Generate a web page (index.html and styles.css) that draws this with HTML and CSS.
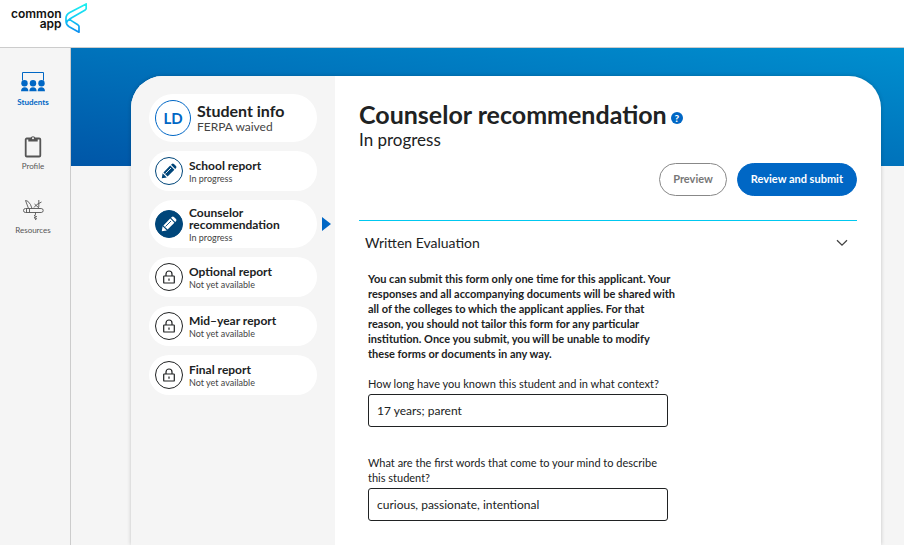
FILE: index.html
```html
<!DOCTYPE html>
<html lang="en">
<head>
<meta charset="utf-8">
<meta name="viewport" content="width=device-width, initial-scale=1">
<title>Counselor recommendation</title>
<link rel="stylesheet" href="styles.css">
</head>
<body>
<header class="topbar">
  <a class="logo" href="#" aria-label="Common App">
    <span class="logo-text"><span>common</span><span>app</span></span>
    <svg class="logo-mark" viewBox="0 0 22 30" aria-hidden="true">
      <defs><linearGradient id="mark" x1="0" y1="0" x2="0" y2="1"><stop offset="0" stop-color="#1ff0ee"/><stop offset=".5" stop-color="#12ccf5"/><stop offset="1" stop-color="#0a8df0"/></linearGradient></defs>
      <path d="M21.200.9 4.800 9.400Q1 11.500 1 15V18Q1 21.800 4.200 23.800L14 29.200V23.600Q14 22.400 12.800 21.700L6.300 17.600Q4.500 16.500 4.800 15.900M21.200.9V5.300Q21.200 6.300 20.200 6.900L6.300 15Q1.800 17.600 1.500 20.200" fill="none" stroke="url(#mark)" stroke-width="1.700" stroke-linejoin="round" stroke-linecap="round"/>
    </svg>
  </a>
</header>
<div class="shell">
  <nav class="rail" aria-label="Main">
    <a class="rail-link active" href="#">
      <svg class="rail-icon" viewBox="0 0 24 24" aria-hidden="true">
        <path d="M1.500 9.500v-8h21v8" fill="none" stroke="currentColor"/>
        <g fill="currentColor"><circle cx="3.500" cy="12.200" r="3.200"/><circle cx="12" cy="12.200" r="3.200"/><circle cx="20.500" cy="12.200" r="3.200"/>
        <path d="M0 20.300q.2-4 3.700-4T7.400 20.300zM8.300 20.300q.2-4 3.700-4T15.700 20.300zM16.600 20.300q.2-4 3.700-4T24 20.300z"/></g>
      </svg>
      <span>Students</span>
    </a>
    <a class="rail-link" href="#">
      <svg class="rail-icon" viewBox="0 0 24 24" aria-hidden="true">
        <path d="M5.800 3.500h12.400q1.100 0 1.100 1.100v15.800q0 1.100-1.100 1.100H5.800q-1.100 0-1.100-1.100V4.600Q4.700 3.500 5.800 3.500z" fill="none" stroke="currentColor" stroke-width="1.800"/>
        <path d="M7.300 3H9.600a2.500 2.500 0 0 1 4.800 0h2.300v3.500H7.300z" fill="currentColor"/><circle cx="12" cy="3.200" r="1" fill="#f5f5f5"/>
      </svg>
      <span>Profile</span>
    </a>
    <a class="rail-link" href="#">
      <svg class="rail-icon" viewBox="0 0 24 24" aria-hidden="true" fill="none" stroke="currentColor" stroke-width=".9" stroke-linejoin="round">
        <path d="M4.500 9.500h15.700a2 2 0 0 1 0 4H4.500a2 2 0 0 1 0-4zM5.500 9.500v4M8.500 9.500v4M7.500 9.500 4.500 1.500l2.300.7Q10 5 11 9.500M13 8.500q1.500-3 7.500-5.500M13.500 5l5 4.500M17.800 1v7M14.500 13.500v2.200l-1.500 1 2.700.9-2.700 1.200 2.700.9-1.700 1.200"/>
      </svg>
      <span>Resources</span>
    </a>
  </nav>
  <main class="stage">
    <div class="card">
      <aside class="steps" aria-label="Forms">
        <a class="step student" href="#">
          <span class="badge initials">LD</span>
          <span class="step-text"><strong>Student info</strong><small>FERPA waived</small></span>
        </a>
        <a class="step" href="#">
          <span class="badge edit"><svg viewBox="0 0 16 16" aria-hidden="true"><use href="#pencil"/></svg></span>
          <span class="step-text"><strong>School report</strong><small>In progress</small></span>
        </a>
        <a class="step current" href="#" aria-current="page">
          <span class="badge edit"><svg viewBox="0 0 16 16" aria-hidden="true"><use href="#pencil"/></svg></span>
          <span class="step-text"><strong>Counselor recommendation</strong><small>In progress</small></span>
        </a>
        <a class="step" href="#">
          <span class="badge"><svg viewBox="0 0 16 16" aria-hidden="true"><use href="#lock"/></svg></span>
          <span class="step-text"><strong>Optional report</strong><small>Not yet available</small></span>
        </a>
        <a class="step" href="#">
          <span class="badge"><svg viewBox="0 0 16 16" aria-hidden="true"><use href="#lock"/></svg></span>
          <span class="step-text"><strong>Mid–year report</strong><small>Not yet available</small></span>
        </a>
        <a class="step" href="#">
          <span class="badge"><svg viewBox="0 0 16 16" aria-hidden="true"><use href="#lock"/></svg></span>
          <span class="step-text"><strong>Final report</strong><small>Not yet available</small></span>
        </a>
      </aside>
      <section class="content">
        <div class="title-row">
          <h1>Counselor recommendation</h1>
          <button class="help" type="button" aria-label="Help">?</button>
        </div>
        <p class="status">In progress</p>
        <div class="actions">
          <button class="btn" type="button">Preview</button>
          <button class="btn primary" type="button">Review and submit</button>
        </div>
        <button class="section-toggle" type="button" aria-expanded="true">
          <span>Written Evaluation</span>
          <svg class="chevron" viewBox="0 0 12 8" aria-hidden="true"><path d="m1 1.200 5 5 5-5" fill="none" stroke="currentColor" stroke-width="1.300"/></svg>
        </button>
        <form class="form">
          <p class="notice">You can submit this form only one time for this applicant. Your responses and all accompanying documents will be shared with all of the colleges to which the applicant applies. For that reason, you should not tailor this form for any particular institution. Once you submit, you will be unable to modify these forms or documents in any way.</p>
          <div class="field">
            <label for="known">How long have you known this student and in what context?</label>
            <input id="known" type="text" value="17 years; parent">
          </div>
          <div class="field">
            <label for="words">What are the first words that come to your mind to describe this student?</label>
            <input id="words" type="text" value="curious, passionate, intentional">
          </div>
        </form>
      </section>
    </div>
  </main>
</div>
<svg class="defs" width="0" height="0" aria-hidden="true">
  <symbol id="pencil" viewBox="0 0 16 16">
    <path d="M.8 15.200 1.600 10.200 5.800 14.400zM2.400 9.400 9.200 2.600 13.400 6.800 6.600 13.600zM10 1.800l.9-.9q1-.8 2 .1l2.100 2.100q.9 1 .1 2L14.200 6z" fill="currentColor"/>
    <path d="m4.500 10.500 5.500-5.500" stroke="var(--cut)" stroke-width=".9" fill="none"/>
  </symbol>
  <symbol id="lock" viewBox="0 0 16 16">
    <path d="M3.300 7h9.400q.6 0 .6.600v5.800q0 .6-.6.600H3.300q-.6 0-.6-.6V7.600Q2.700 7 3.300 7zM5 7V5a3 3 0 0 1 6 0v2M8 9.600v2.200" fill="none" stroke="currentColor" stroke-width="1.200"/>
  </symbol>
</svg>
</body>
</html>
```
FILE: styles.css
```css
* { box-sizing: border-box; }
html, body { height: 100%; }
body {
  margin: 0;
  display: flex;
  flex-direction: column;
  overflow: hidden;
  background: #f5f5f5;
  color: #202223;
  font-family: Lato, "Liberation Sans", sans-serif;
  font-size: 12px;
}
a { color: inherit; text-decoration: none; }
button, input { font: inherit; color: inherit; }
p, h1 { margin: 0; }
.defs { position: absolute; }

.topbar {
  flex: none;
  height: 48px;
  padding: 3px 11px;
  background: #fff;
  border-bottom: 1px solid #ccc;
}
.logo { display: inline-flex; gap: 3px; color: #111; }
.logo-text {
  display: flex;
  flex-direction: column;
  align-items: flex-end;
  padding-top: 6px;
  font: 600 12px/10px Inter, sans-serif;
}
.logo-mark { width: 22px; height: 30px; }

.shell { flex: 1; display: flex; min-height: 0; }
.rail {
  flex: none;
  width: 71px;
  padding: 23px 4px 0 0;
  border-right: 1px solid #ccc;
  display: flex;
  flex-direction: column;
  gap: 28px;
  color: #555;
}
.rail-link {
  display: flex;
  flex-direction: column;
  align-items: center;
  gap: 2px;
  font-size: 8px;
  line-height: 10px;
}
.rail-link.active { color: #0067c5; font-weight: 700; }
.rail-icon { width: 24px; height: 24px; }

.stage {
  flex: 1;
  min-width: 0;
  padding: 28px 23px 0 60px;
  display: flex;
  background: linear-gradient(8deg, #0056a7 0%, #008fcf 100%) top / 100% 118px no-repeat;
}
.card {
  flex: 1;
  min-width: 0;
  display: flex;
  overflow: hidden;
  border-radius: 32px 32px 0 0;
  background: #fff;
  box-shadow: 0 0 4px rgba(0, 0, 0, .2);
}
.steps {
  flex: none;
  width: 204px;
  padding: 18px;
  background: #f5f5f5;
  display: flex;
  flex-direction: column;
  gap: 9px;
}
.step {
  position: relative;
  min-height: 40px;
  padding: 0 6px;
  border-radius: 24px;
  background: #fff;
  display: flex;
  align-items: center;
  gap: 6px;
}
.student, .current { min-height: 48px; }
.badge {
  --cut: #fff;
  flex: none;
  width: 28px;
  height: 28px;
  border: 1px solid currentColor;
  border-radius: 50%;
  display: grid;
  place-items: center;
}
.badge svg { width: 16px; height: 16px; }
.edit { color: #00467a; }
.current .badge { --cut: #00467a; color: #fff; background: #00467a; border-color: #00467a; }
.initials {
  width: 36px;
  height: 36px;
  color: #0067c5;
  font-size: 15px;
  font-weight: 700;
}
.step-text { display: flex; flex-direction: column; padding-top: 2px; }
.step-text strong { font-size: 12px; line-height: 12px; }
.step-text small { font-size: 9px; line-height: 13px; color: #444; }
.student .step-text { padding-top: 0; }
.student .step-text strong { font-size: 16px; line-height: 16px; }
.student .step-text small { font-size: 12px; line-height: 15px; }
.current::after {
  content: "";
  position: absolute;
  left: calc(100% + 5px);
  top: 17px;
  border: 7px solid transparent;
  border-left: 9px solid #0067c5;
  border-right: 0;
}

.content { flex: 1; min-width: 0; padding: 23px 24px; }
.title-row { display: flex; align-items: center; gap: 4px; }
h1 { font-size: 25px; line-height: 30px; font-weight: 700; }
.help {
  width: 12px;
  height: 12px;
  margin-top: 7px;
  padding: 0;
  border: 0;
  border-radius: 50%;
  background: #0067c5;
  color: #fff;
  font-size: 10px;
  font-weight: 900;
  line-height: 12px;
}
.status { font-size: 17px; line-height: 22px; }
.actions {
  display: flex;
  justify-content: flex-end;
  gap: 10px;
  padding: 12px 0 24px;
  border-bottom: 1px solid #00c8f0;
}
.btn {
  height: 33px;
  padding: 0 13px 3px;
  border: 1px solid #888;
  border-radius: 17px;
  background: #fff;
  color: #777;
  font-size: 11px;
  font-weight: 700;
}
.primary { background: #0067c5; border-color: #0067c5; color: #fff; }
.section-toggle {
  width: 100%;
  padding: 13px 9px 13px 6px;
  border: 0;
  background: none;
  display: flex;
  justify-content: space-between;
  align-items: center;
  font-size: 14px;
  line-height: 18px;
}
.chevron { width: 12px; height: 8px; color: #444; }
.form { max-width: 320px; padding: 6px 0 0 9px; }
.notice { max-width: 308px; font-size: 11px; line-height: 15px; font-weight: 700; }
.field { max-width: 300px; padding: 15px 0 13px; }
.field label { display: block; margin-bottom: 3px; font-size: 11px; line-height: 15px; }
.field input {
  width: 100%;
  height: 33px;
  padding: 0 8px;
  border: 1px solid #202223;
  border-radius: 3px;
  background: #fff;
  font-size: 12px;
}
```
